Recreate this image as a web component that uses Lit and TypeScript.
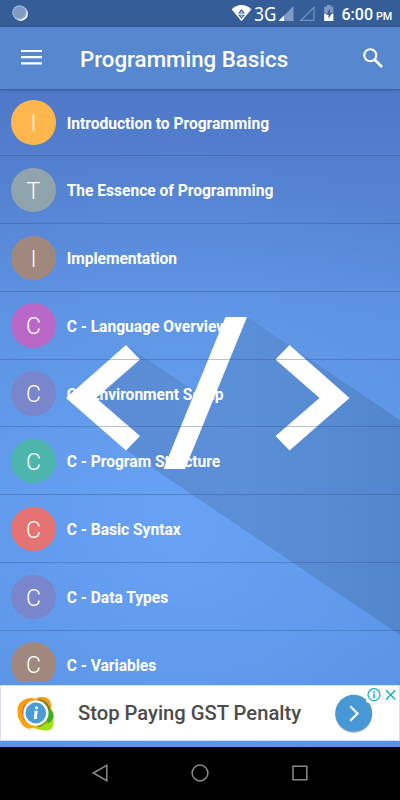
import { LitElement, html, css } from "lit";
import { customElement } from "lit/decorators.js";
import { styleMap } from "lit/directives/style-map.js";

const TOPICS = [
  { title: "Introduction to Programming", color: "#ffb74d" },
  { title: "The Essence of Programming", color: "#90a4ae" },
  { title: "Implementation", color: "#a1887f" },
  { title: "C - Language Overview", color: "#ba68c8" },
  { title: "C - Environment Setup", color: "#7986cb" },
  { title: "C - Program Structure", color: "#4db6ac" },
  { title: "C - Basic Syntax", color: "#e57373" },
  { title: "C - Data Types", color: "#7986cb" },
  { title: "C - Variables", color: "#a1887f" },
];

@customElement("status-bar")
class StatusBar extends LitElement {
  static styles = css`
    :host { display: flex; height: 27px; box-sizing: border-box; background: linear-gradient(#355e99 25px, #2f5488); color: #fff; font-family: Roboto, sans-serif; }
    .sync { width: 16px; height: 16px; margin: 5px 0 0 12px; }
    .signals { margin-left: auto; height: 27px; flex: none; width: 110px; }
    .clock { width: 58.500px; box-sizing: border-box; padding-top: 5.500px; line-height: 18px; font-size: 16px; font-weight: 500; white-space: nowrap; }
    .pm { font-size: 10.800px; margin-left: -1px; }
    .net { font-family: "Noto Sans", sans-serif; font-size: 20.500px; }
  `;
  render() {
    return html`
      <svg class="sync" viewBox="0 0 16 16">
        <circle cx="8.700" cy="8.700" r="7.200" fill="#f4f7fb" />
        <circle cx="7.500" cy="7.500" r="7" fill="#7f9bc4" />
        <circle cx="7.500" cy="7.500" r="6.600" fill="none" stroke="#b4c5dd" stroke-width="1.300" stroke-dasharray="1.300 1" />
      </svg>
      <svg class="signals" viewBox="0 0 110 27">
        <path d="M-.4 9.200Q9.500 1 19.400 9.200L9.500 21.200Z" fill="#fff" />
        <path d="M9.500 9l3.500 4.600H6zM6 14.800h7L9.500 18.700z" fill="#355e99" />
        <path d="M9.500 11.200l1.300 1.600H8.200zM8.200 15.500h2.600L9.500 17z" fill="#fff" />
        <text class="net" x="22.300" y="21" fill="#fff" textLength="22" lengthAdjust="spacingAndGlyphs">3G</text>
        <path d="M61.500 6v15H46.500z" fill="#7e9ac5" /><path d="M52 15.500V21h-5.500z" fill="#fff" />
        <path d="M82 7.400v12.900H68.800z" fill="none" stroke="#7590bd" stroke-width="1.300" />
        <path d="M94.800 5h4v1.700h2.600V14h-9.200V6.700h2.600z" fill="#7e9ac5" />
        <path d="M92.200 14h9.200v7h-9.200z" fill="#fff" />
        <path d="M98.100 8.500l-4 6.200h2.400v4l3.700-6H98z" fill="#355e99" />
      </svg>
      <div class="clock">6:00 <span class="pm">PM</span></div>
    `;
  }
}

@customElement("title-bar")
class TitleBar extends LitElement {
  static styles = css`
    :host { display: flex; align-items: center; height: 62px; box-sizing: border-box; padding: 0 17px 0 21px; background: #5788cf; box-shadow: 0 1px 2px rgba(20, 45, 100, .5); position: relative; color: #fff; }
    .menu { width: 21px; height: 16px; margin-bottom: 2px; }
    .title { flex: 1; margin: 2px 0 0 38px; font: 500 22.300px/30px Roboto, sans-serif; white-space: nowrap; }
    .search { width: 20px; height: 20px; margin-bottom: 1px; }
  `;
  render() {
    return html`
      <svg class="menu" viewBox="0 0 21 16"><path d="M0 2h21M0 8.200h21M0 14.300h21" stroke="#fff" stroke-width="2.200" /></svg>
      <div class="title">Programming Basics</div>
      <svg class="search" viewBox="0 0 20 20" fill="none" stroke="#fff">
        <circle cx="7.300" cy="7.300" r="6" stroke-width="2.100" />
        <path d="M11.500 11.500L19 19" stroke-width="2.700" />
      </svg>
    `;
  }
}

@customElement("topic-row")
class TopicRow extends LitElement {
  static properties = { label: {}, color: {} };
  declare label: string;
  declare color: string;
  static styles = css`
    :host { display: flex; align-items: center; height: 67.770px; box-sizing: border-box; padding: 1px 0 0 11.300px; border-bottom: 1px solid rgba(45, 75, 125, .34); font-family: Roboto, sans-serif; color: #fff; }
    .avatar { width: 44.400px; height: 44.400px; border-radius: 50%; display: grid; place-items: center; font-size: 23px; font-weight: 300; line-height: 44px; }
    .letter { padding-top: 2px; }
    .name { margin-left: 11px; padding-top: 2.500px; font-size: 15.600px; letter-spacing: -.02px; font-weight: 700; line-height: 20px; white-space: nowrap; }
  `;
  render() {
    return html`
      <div class="avatar" style=${styleMap({ background: this.color })}><span class="letter">${this.label[0]}</span></div>
      <div class="name">${this.label}</div>
    `;
  }
}

@customElement("ad-banner")
class AdBanner extends LitElement {
  static styles = css`
    :host { display: flex; align-items: center; height: 56px; box-sizing: border-box; background: #fff; border: 1px solid #d9dde8; position: relative; padding-left: 15px; }
    .logo { width: 38px; height: 36px; margin-top: 2px; }
    .text { margin: 0 0 0 24px; font: 500 20.200px/28px Roboto, sans-serif; color: #4c4c4c; white-space: nowrap; }
    .go { position: absolute; left: 332px; top: 7px; width: 42px; height: 44px; }
    .choices { position: absolute; right: 0; top: 0; width: 33px; height: 17px; }
  `;
  render() {
    return html`
      <svg class="logo" viewBox="0 0 38 36">
        <ellipse cx="15" cy="14" rx="13.500" ry="12" fill="#f89c12" />
        <rect x="3" y="9" width="19" height="24" rx="9" fill="#f8a313" transform="rotate(-28 12 21)" />
        <rect x="17" y="1" width="18" height="22" rx="8" fill="#f59a14" />
        <path d="M18 31q5 4 13 3.500 6-.5 6.500-7V18L28 14z" fill="#a4df12" />
        <path d="M30 10q7 3 7.500 9 0 6-6 9z" fill="#3fae1c" />
        <path d="M22 3q9 1 12 9l-4 5z" fill="#75801a" />
        <path d="M6 17q0-9 9-12l8-1L8 25z" fill="#f4541a" />
        <path d="M11 28q5 6 11 4l4-5z" fill="#f5b300" />
        <path d="M21 31q8 0 11-8l-4-2z" fill="#71941b" />
        <circle cx="19.800" cy="17" r="12.700" fill="#fff" />
        <circle cx="19.800" cy="17" r="10.400" fill="#4a9bd6" />
        <circle cx="20.500" cy="11.800" r="1.500" fill="#fff" />
        <path d="M18.600 14.700h3l-.8 8.300h-3z" fill="#fff" />
      </svg>
      <div class="text">Stop Paying GST Penalty</div>
      <svg class="go" viewBox="0 0 42 44">
        <circle cx="20.700" cy="21.700" r="18.500" fill="#b9b9b9" opacity=".7" />
        <circle cx="20.700" cy="20.300" r="18.500" fill="#4898d5" />
        <path d="M17.300 13.300l7.200 7.200-7.200 7.200" fill="none" stroke="#fff" stroke-width="2.200" />
      </svg>
      <svg class="choices" viewBox="0 0 33 17">
        <path d="M0 0h33v17H3q-3 0-3-3z" fill="#fff" />
        <circle cx="8" cy="8.700" r="6" fill="none" stroke="#10aec7" stroke-width="1.200" />
        <path d="M7.200 5h1.600v1.700H7.200zM7.200 7.700h1.600v4.600H7.200z" fill="#10aec7" />
        <path d="M20 4.200l9.200 9.200M29.200 4.200L20 13.400" stroke="#10aec7" stroke-width="1.400" />
      </svg>
    `;
  }
}

@customElement("nav-bar")
class NavBar extends LitElement {
  static styles = css`
    :host { display: flex; align-items: center; justify-content: center; gap: 82px; height: 53px; box-sizing: border-box; padding-bottom: 1px; background: #000; }
    .key { width: 18px; height: 18px; overflow: visible; fill: none; stroke: #8b8b8b; stroke-width: 1.500; }
  `;
  render() {
    return html`
      <svg class="key" viewBox="0 0 18 18"><path d="M15.800 1.300v15.400L2.300 9z" /></svg>
      <svg class="key" viewBox="0 0 18 18"><circle cx="9" cy="9" r="7.900" /></svg>
      <svg class="key" viewBox="0 0 18 18"><path d="M2 2.200h13.800v13.600H2z" /></svg>
    `;
  }
}

@customElement("app-root")
class AppRoot extends LitElement {
  static styles = css`
    :host { display: flex; flex-direction: column; height: 800px; width: 400px; overflow: hidden; }
    .content { flex: 1; min-height: 0; position: relative; display: flex; flex-direction: column; }
    .art { position: absolute; inset: 0; width: 400px; height: 658px; }
    .list { position: relative; height: 592px; margin-top: -.5px; overflow: hidden; }
    .ad { margin-top: 4.500px; }
    status-bar, title-bar, nav-bar { flex: none; }
    title-bar { z-index: 1; }
  `;
  render() {
    return html`
      <status-bar></status-bar>
      <title-bar></title-bar>
      <div class="content">
        <svg class="art" viewBox="0 89 400 658">
          <defs>
            <linearGradient id="sky" x1="0" y1="89" x2="0" y2="747" gradientUnits="userSpaceOnUse">
              <stop offset="0" stop-color="#4f79c8" />
              <stop offset=".15" stop-color="#5481d0" />
              <stop offset=".35" stop-color="#5a90de" />
              <stop offset=".6" stop-color="#5c96e6" />
              <stop offset="1" stop-color="#568fe0" />
            </linearGradient>
            <radialGradient id="glow" cx="180" cy="530" r="390" gradientUnits="userSpaceOnUse">
              <stop offset="0" stop-color="#6ca5f8" stop-opacity=".8" />
              <stop offset=".6" stop-color="#6ca5f8" stop-opacity=".25" />
              <stop offset="1" stop-color="#6ca5f8" stop-opacity="0" />
            </radialGradient>
            <linearGradient id="shade" x1="130" y1="0" x2="400" y2="0" gradientUnits="userSpaceOnUse">
              <stop offset="0" stop-color="#5b8dd7" />
              <stop offset=".4" stop-color="#5b8fd8" />
              <stop offset="1" stop-color="#5287cd" />
            </linearGradient>
          </defs>
          <path d="M0 89h400v658H0z" fill="url(#sky)" />
          <path d="M0 89h400v658H0z" fill="url(#glow)" />
          <path d="M126 345L195 391.500 247 317 400 420V635L126 450 90 398z" fill="url(#shade)" />
          <g fill="#fff">
            <path d="M66 398L126 345 140 359.500 96 398 140 436 126 450.500z" />
            <path d="M225.500 317H247L185 469H163.500z" />
            <path d="M289.500 345L349.500 398 289.500 450.500 275.500 436 319.500 398 275.500 359.500z" />
          </g>
        </svg>
        <div class="list">
          ${TOPICS.map((t) => html`<topic-row .label=${t.title} .color=${t.color}></topic-row>`)}
        </div>
        <ad-banner class="ad"></ad-banner>
      </div>
      <nav-bar></nav-bar>
    `;
  }
}
